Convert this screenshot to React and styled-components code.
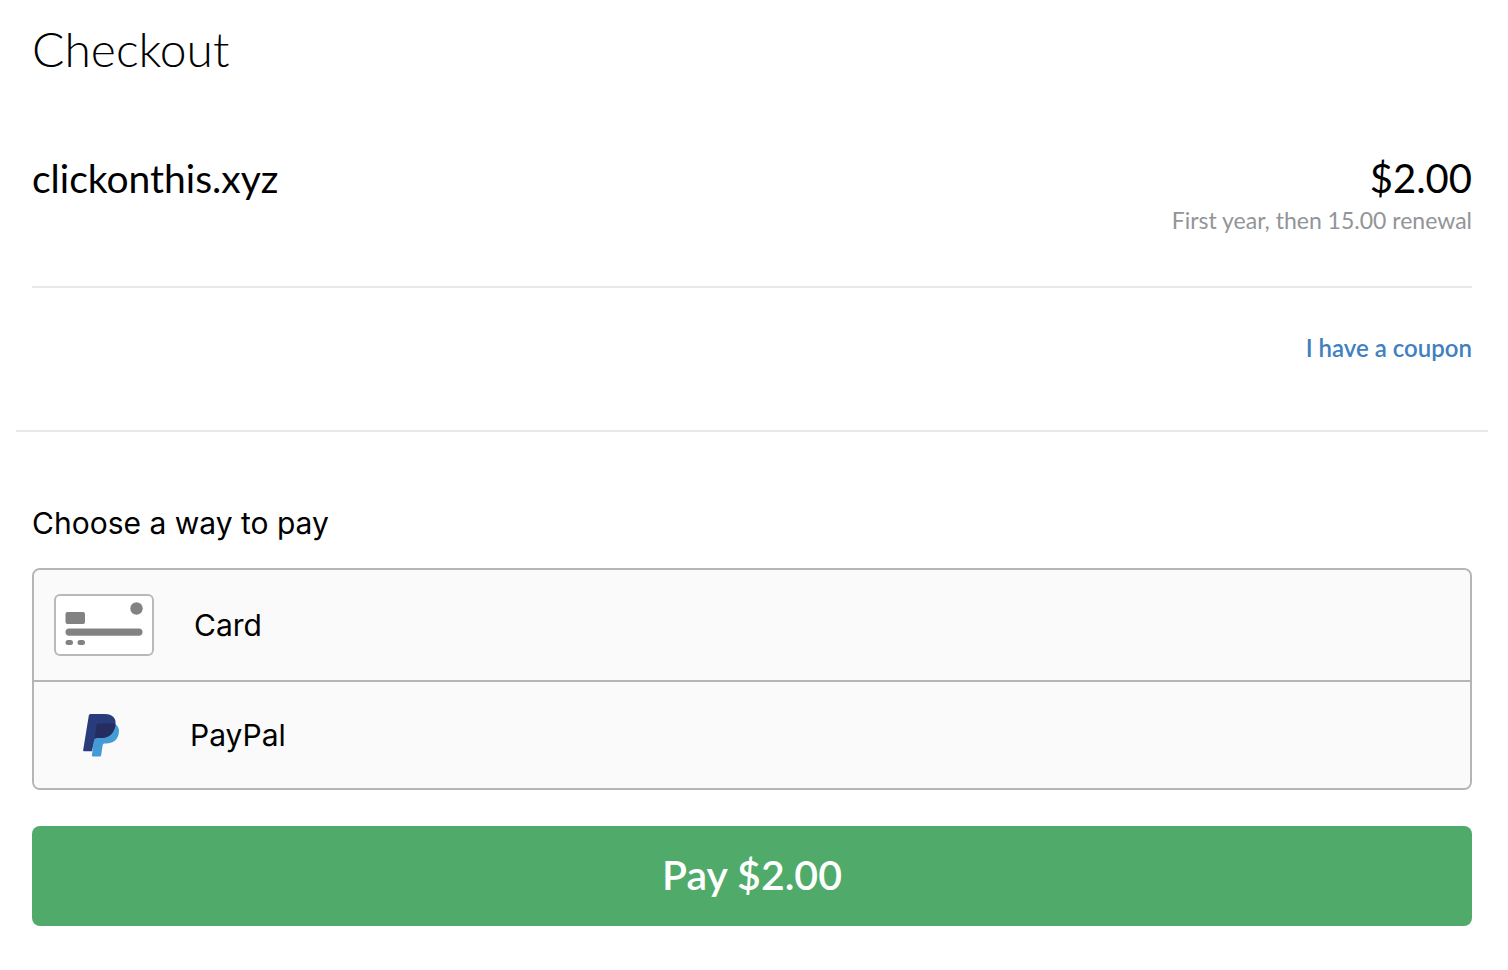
import {useState} from 'react';
import styled, {createGlobalStyle} from 'styled-components'

const GlobalStyle = createGlobalStyle`
    * {
        box-sizing: border-box;
    }

    body {
        margin: 0;
        background-color: #fff;
        color: #000;
        font-family: Lato, "Liberation Sans", sans-serif;
    }
`;

const Page = styled.main`
    display: flex;
    flex-direction: column;
    padding: 20px 20px 40px 16px;
`;

const Summary = styled.section`
    display: flex;
    flex-direction: column;
    padding: 0 16px 66px;
    border-bottom: solid 2px #e8e8e8;
`;

const Title = styled.h1`
    margin: 0;
    font-size: 48px;
    line-height: 58px;
    font-weight: 300;
`;

const Item = styled.div`
    display: flex;
    justify-content: space-between;
    align-items: flex-start;
    margin-top: 76px;
    padding-bottom: 50px;
    border-bottom: solid 2px #e8e8e8;
`;

const ItemName = styled.h2`
    margin: 0;
    font-size: 39px;
    line-height: 48px;
    font-weight: 400;
`;

const ItemPrice = styled.div`
    display: flex;
    flex-direction: column;
    gap: 2px;
    text-align: right;
    font-size: 40px;
    line-height: 48px;
`;

const Renewal = styled.span`
    color: #929497;
    font-size: 23px;
    line-height: 32px;
`;

const CouponLink = styled.a`
    align-self: flex-end;
    margin-top: 44px;
    color: #3f80c1;
    font-size: 24px;
    line-height: 32px;
    font-weight: 600;
    text-decoration: none;
`;

const Payment = styled.section`
    display: flex;
    flex-direction: column;
    padding: 70px 16px 0;
`;

const PaymentTitle = styled.h2`
    margin: 0 0 24px;
    font-family: Inter, "Liberation Sans", sans-serif;
    font-size: 30px;
    line-height: 42px;
    font-weight: 400;
`;

const MethodList = styled.div`
    display: flex;
    flex-direction: column;
    overflow: hidden;
    border: solid 2px #b5b5b5;
    border-radius: 8px;
`;

const Method = styled.button`
    display: flex;
    align-items: center;
    gap: 40px;
    padding: ${({$padding}) => $padding}px 20px;
    border: none;
    background-color: #fafafa;
    color: #000;
    font-family: Inter, "Liberation Sans", sans-serif;
    font-size: 30px;
    text-align: left;
    cursor: pointer;

    & + & {
        border-top: solid 2px #b5b5b5;
    }
`;

const PayButton = styled.button`
    height: 100px;
    margin-top: 36px;
    padding: 0 16px 4px;
    border: none;
    border-radius: 8px;
    background-color: #50ab6b;
    color: #fff;
    font-family: Lato, "Liberation Sans", sans-serif;
    font-size: 41px;
    font-weight: 600;
    cursor: pointer;
`;

const CardIcon = () => (
    <svg width="100" height="62" viewBox="0 0 100 62" aria-hidden="true">
        <rect x="1" y="1" width="98" height="60" rx="5" fill="#fff" stroke="#b9b9b9" strokeWidth="2"/>
        <g fill="#828282">
            <circle cx="82.5" cy="14.5" r="6.2"/>
            <rect x="11.5" y="18" width="19.5" height="12" rx="2"/>
            <rect x="11.5" y="34.5" width="77" height="7.2" rx="3.6"/>
            <rect x="11.5" y="46" width="7.5" height="5" rx="2.5"/>
            <rect x="23.5" y="46" width="7.5" height="5" rx="2.5"/>
        </g>
    </svg>
);

const PayPalIcon = () => (
    <svg width="96" height="62" viewBox="0 0 96 62" aria-hidden="true">
        <path fill="#459bd5" d="M42.2 19.6H57c2.2 0 4 .4 5.300 1.300 2.300 1.700 3.200 4.600 2.500 8.400-1.200 7-5.800 10.200-12.700 10.200h-1.500c-1 0-1.700.6-1.900 1.600l-1.500 9.900c-.2 1-.8 1.500-1.700 1.500h-6.600c-.7 0-1.100-.5-1-1.200z"/>
        <path fill="#283b7b" d="M36.800 10H51c7.400 0 11.500 4.200 10.500 10.800-1.200 8.400-6.200 13.100-14.200 13.100h-4.800c-1.200 0-2 .7-2.200 1.800L38 47.200H30.300c-.8 0-1.200-.5-1.100-1.300l5.600-34.300c.2-1 .9-1.600 2-1.600z"/>
        <path fill="#242c60" d="M44.200 19.600H57c1.700 0 3.200.2 4.500.8v.4c-1.200 8.400-6.200 13.100-14.200 13.100h-4.800c-.8 0-1.400.3-1.800.8l1.900-13.400c.1-1.100.7-1.700 1.600-1.700z"/>
    </svg>
);

const App = () => {
    const [method, setMethod] = useState('')

    return (
        <>
            <GlobalStyle />
            <Page>
                <Summary>
                    <Title>Checkout</Title>
                    <Item>
                        <ItemName>clickonthis.xyz</ItemName>
                        <ItemPrice>
                            $2.00
                            <Renewal>First year, then 15.00 renewal</Renewal>
                        </ItemPrice>
                    </Item>
                    <CouponLink href="#coupon">I have a coupon</CouponLink>
                </Summary>
                <Payment>
                    <PaymentTitle id="payment-title">Choose a way to pay</PaymentTitle>
                    <MethodList role="group" aria-labelledby="payment-title">
                        <Method type="button" $padding={24} aria-pressed={method === 'card'} onClick={() => setMethod('card')}>
                            <CardIcon />
                            Card
                        </Method>
                        <Method type="button" $padding={22} aria-pressed={method === 'paypal'} onClick={() => setMethod('paypal')}>
                            <PayPalIcon />
                            PayPal
                        </Method>
                    </MethodList>
                    <PayButton type="button">Pay $2.00</PayButton>
                </Payment>
            </Page>
        </>
    )
}

export default App;
